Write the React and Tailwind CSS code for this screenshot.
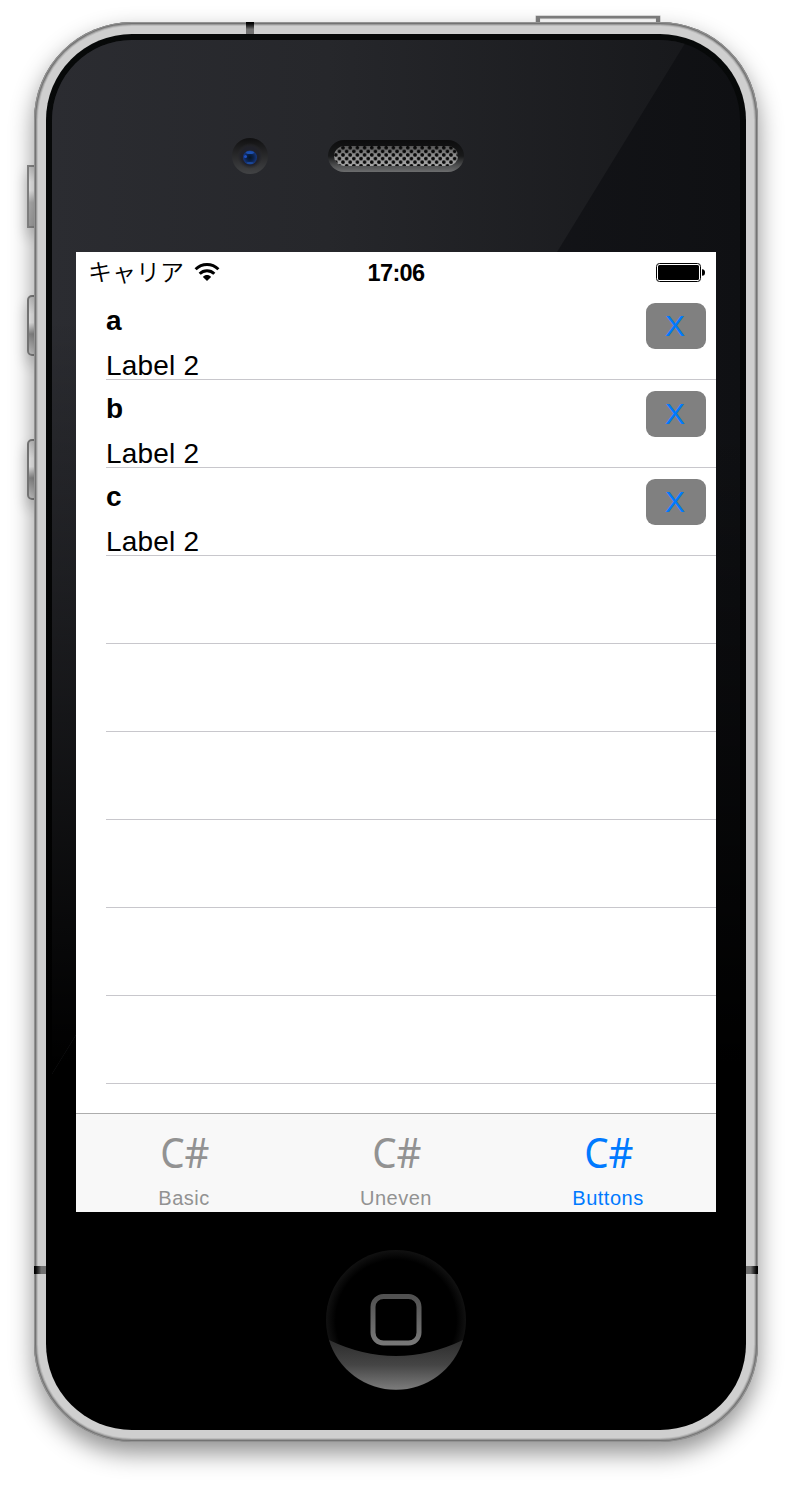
import React from "react";

const rows = ["a", "b", "c"];
const emptyRows = [0, 1, 2, 3, 4, 5];
const tabs = [
  { label: "Basic", active: false },
  { label: "Uneven", active: false },
  { label: "Buttons", active: true },
];

function WifiIcon() {
  return (
    <svg className="relative left-[0.5px]" width="26" height="20" viewBox="0 0 26 20" fill="none" stroke="#000" strokeWidth="3">
      <path d="M1.600 7.200C8 .9 18 .9 24.400 7.200" />
      <path d="M5.700 11.700C9.800 7.700 16.200 7.700 20.300 11.700" />
      <path d="M8.900 14.900C11.200 12.500 14.800 12.500 17.100 14.900L13 19Z" fill="#000" stroke="none" />
    </svg>
  );
}

function BatteryIcon() {
  return (
    <svg className="mt-px" width="50" height="19" viewBox="0 0 50 19">
      <rect x=".5" y=".5" width="44" height="18" rx="3" fill="none" stroke="#000" />
      <rect x="2" y="2" width="41" height="15" rx="1.500" />
      <path d="M46 6.200C48.300 6.200 49 7.500 49 9.500S48.300 12.800 46 12.800Z" />
    </svg>
  );
}

function StatusBar() {
  return (
    <div className="relative flex h-10 shrink-0 items-center justify-between pl-3 pr-[10px]">
      <div className="flex items-center">
        <span className="w-[105px] whitespace-nowrap pb-[3px] text-[24px] leading-9 font-[350] [font-family:'Noto_Sans_CJK_JP',sans-serif]">
          キャリア
        </span>
        <WifiIcon />
      </div>
      <span className="absolute inset-x-0 top-[1px] text-center text-[23.500px] leading-10 font-bold tracking-[-0.600px]">
        17:06
      </span>
      <BatteryIcon />
    </div>
  );
}

function Row({ title }) {
  return (
    <div className="ml-[30px] flex h-[88px] shrink-0 items-start justify-between border-b border-[#c8c7cc] pr-[10px]">
      <div className="flex flex-col">
        <span className="mt-[6px] h-[46px] text-[28px] leading-[46px] font-bold">{title}</span>
        <span className="h-[36px] text-[28px] leading-[43px] tracking-[0.200px] whitespace-nowrap">Label 2</span>
      </div>
      <button className="mt-[11px] h-[46px] w-[60px] rounded-[9px] bg-[#808080] pr-[2px] text-[30px] leading-[44px] text-[#007aff]">
        X
      </button>
    </div>
  );
}

function TabBar() {
  return (
    <div className="flex h-[99px] shrink-0 justify-between border-t border-[#adadad] bg-[#f8f8f8] px-[2px]">
      {tabs.map((tab) => (
        <div
          key={tab.label}
          className={
            tab.active
              ? "flex w-[212px] flex-col items-center text-[#007aff]"
              : "flex w-[212px] flex-col items-center text-[#929292]"
          }
        >
          <span className="mt-[8px] ml-[1px] h-[60px] origin-center scale-x-[0.920] text-[42px] leading-[60px] [font-family:'Noto_Sans',sans-serif]">
            C#
          </span>
          <span className="mt-[4px] text-[20px] leading-6 tracking-[0.500px]">{tab.label}</span>
        </div>
      ))}
    </div>
  );
}

function Screen() {
  return (
    <div className="relative flex h-[960px] w-[640px] shrink-0 flex-col bg-white text-black">
      <StatusBar />
      <div className="flex h-[821px] flex-col overflow-hidden">
        {rows.map((title) => (
          <Row key={title} title={title} />
        ))}
        {emptyRows.map((n) => (
          <div key={n} className="ml-[30px] h-[88px] shrink-0 border-b border-[#c8c7cc]" />
        ))}
      </div>
      <TabBar />
    </div>
  );
}

function CameraAndSpeaker() {
  return (
    <svg width="240" height="40" viewBox="228 136 240 40">
      <defs>
        <linearGradient id="ring" x1="0" y1="0" x2="0" y2="1">
          <stop offset="0" stopColor="#101011" />
          <stop offset="1" stopColor="#424345" />
        </linearGradient>
        <radialGradient id="glass">
          <stop offset="0" stopColor="#20232b" />
          <stop offset=".7" stopColor="#20212a" />
          <stop offset="1" stopColor="#2a2a2d" stopOpacity="0" />
        </radialGradient>
        <radialGradient id="lens">
          <stop offset="0" stopColor="#071420" />
          <stop offset=".5" stopColor="#0b2148" />
          <stop offset="1" stopColor="#15367f" />
        </radialGradient>
        <linearGradient id="slot" x1="0" y1="0" x2="0" y2="1">
          <stop offset="0" stopColor="#0d0d0e" />
          <stop offset=".5" stopColor="#18191a" />
          <stop offset=".8" stopColor="#4e4f50" />
          <stop offset="1" stopColor="#6c6d6e" />
        </linearGradient>
        <linearGradient id="metal" x1="0" y1="0" x2="0" y2="1">
          <stop offset="0" stopColor="#555" />
          <stop offset=".5" stopColor="#929292" />
          <stop offset="1" stopColor="#a5a5a5" />
        </linearGradient>
        <pattern id="mesh" x="334" y="146" width="7.200" height="7.200" patternUnits="userSpaceOnUse">
          <circle cx="1.800" cy="1.800" r="1.850" fill="#080808" />
          <circle cx="5.400" cy="5.400" r="1.850" fill="#080808" />
        </pattern>
      </defs>
      <circle cx="250" cy="156" r="18" fill="url(#ring)" />
      <circle cx="250" cy="156" r="13" fill="url(#glass)" />
      <circle cx="250" cy="157.500" r="7" fill="url(#lens)" />
      <ellipse cx="250" cy="152.500" rx="4" ry="1.600" fill="#1c50b0" />
      <circle cx="245.500" cy="156.500" r="1.500" fill="#1f4fc0" />
      <ellipse cx="250" cy="163" rx="3.500" ry="1" fill="#1b489b" />
      <rect x="328" y="140" width="136" height="32" rx="16" fill="url(#slot)" />
      <rect x="334" y="146" width="124" height="20" rx="10" fill="url(#metal)" />
      <rect x="334" y="146" width="124" height="20" rx="10" fill="url(#mesh)" />
    </svg>
  );
}

function HomeButton() {
  return (
    <svg width="142" height="142" viewBox="-71 -71 142 142">
      <defs>
        <radialGradient id="homeEdge">
          <stop offset=".86" stopColor="#000" />
          <stop offset="1" stopColor="#111" />
        </radialGradient>
        <linearGradient id="homeShine" x1="0" y1="0" x2="0" y2="1">
          <stop offset="0" stopColor="#2c2c2c" />
          <stop offset=".5" stopColor="#454545" />
          <stop offset="1" stopColor="#7c7c7c" />
        </linearGradient>
        <linearGradient id="homeGlyph" x1="0" y1="0" x2="0" y2="1">
          <stop offset="0" stopColor="#515151" />
          <stop offset="1" stopColor="#777" />
        </linearGradient>
      </defs>
      <circle r="70" fill="url(#homeEdge)" />
      <path d="M-67 20Q0 52 67 20A70 70 0 0 1-67 20Z" fill="url(#homeShine)" />
      <rect x="-23" y="-23.500" width="46" height="46.500" rx="10.500" fill="none" stroke="url(#homeGlyph)" strokeWidth="5" />
    </svg>
  );
}

export default function App() {
  return (
    <div className="h-[1488px] w-[792px] overflow-hidden bg-white pt-[22px] pl-[34px] [font-family:'Liberation_Sans',Arial,sans-serif]">
      <div className="relative h-[1420px] w-[724px]">
        {/* hardware keys */}
        <div className="absolute top-[143px] left-[-7px] h-[63px] w-3 border-2 border-[#919191] bg-[linear-gradient(#d5d5d5,#ffffff_25%,#ffffff_40%,#c0c0c0_60%,#b0b0b0)] shadow-[0_8px_14px_rgba(0,0,0,0.22)]" />
        <div className="absolute top-[273px] left-[-7px] h-[61px] w-3 rounded-l-[5px] border-2 border-[#858585] bg-[linear-gradient(#d5d5d5,#ffffff_30%,#ffffff_45%,#959595_65%,#d5d5d5)] shadow-[0_8px_14px_rgba(0,0,0,0.22)]" />
        <div className="absolute top-[417px] left-[-7px] h-[61px] w-3 rounded-l-[5px] border-2 border-[#858585] bg-[linear-gradient(#d5d5d5,#ffffff_30%,#ffffff_45%,#959595_65%,#d5d5d5)] shadow-[0_8px_14px_rgba(0,0,0,0.22)]" />
        <div className="absolute top-[-6px] left-[502px] h-3 w-[124px] border-x-4 border-t-2 border-[#808080] bg-white shadow-[inset_0_1px_1px_#aaa,0_0_0_0.500px_#bbb]" />

        {/* metal band */}
        <div className="relative h-full w-full rounded-[98px] bg-[#cfcfcf] p-3 shadow-[inset_0_0_0_1px_#929292,inset_0_0_0_2px_#737373,inset_0_0_0_3px_#9a9a9a,inset_0_0_0_4px_#bcbcbc,0_11px_24px_rgba(0,0,0,0.440)]">
          <div className="absolute top-0 left-[212px] h-3 w-2 bg-linear-to-b from-black to-[#707070] to-60%" />
          <div className="absolute top-[1244px] left-0 h-2 w-3 bg-linear-to-r from-black to-[#707070] to-60%" />
          <div className="absolute top-[1244px] right-0 h-2 w-3 bg-linear-to-l from-black to-[#707070] to-60%" />

          {/* glass */}
          <div className="h-[1396px] w-[700px] overflow-hidden rounded-[86px] bg-[linear-gradient(#070909,#000_70%)] p-[6px]">
            <div className="relative flex h-[1384px] w-[688px] flex-col items-center overflow-hidden rounded-[80px] bg-[linear-gradient(to_bottom,transparent_28%,#000_74%),linear-gradient(to_right,#141519_60%,#0f1013)]">
              <div className="absolute inset-0 bg-[linear-gradient(to_bottom,transparent_20%,rgba(0,0,0,0.300)_38%,rgba(0,0,0,0.600)_54%,rgba(0,0,0,0.880)_68%,#000_74%),linear-gradient(to_right,#2b2c31,#26272b_40%,#17181b_95%)] [clip-path:polygon(0_0,635px_0,505px_212px,0_1034px)]" />
              <div className="relative flex h-[212px] w-full shrink-0 pt-24 pl-44">
                <CameraAndSpeaker />
              </div>
              <Screen />
              <div className="relative flex grow items-start justify-center pt-[37px]">
                <HomeButton />
              </div>
            </div>
          </div>
        </div>
      </div>
    </div>
  );
}
